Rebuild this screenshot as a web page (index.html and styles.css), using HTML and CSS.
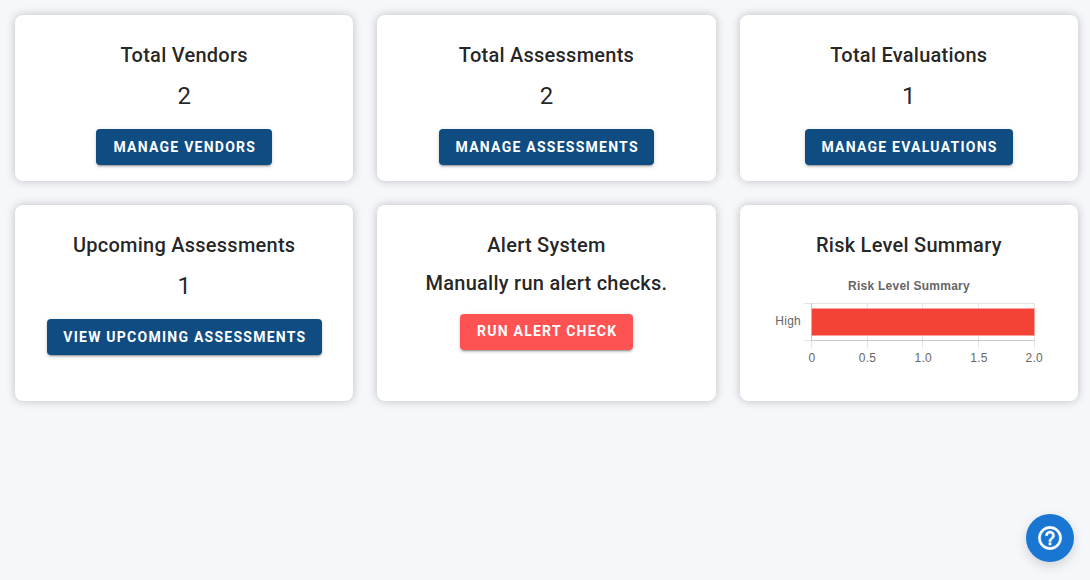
FILE: index.html
```html
<!DOCTYPE html>
<html lang="en">
<head>
<meta charset="utf-8">
<title>Dashboard</title>
<link rel="stylesheet" href="styles.css">
</head>
<body>
<main class="dashboard">
  <section class="card">
    <h2 class="card-title">Total Vendors</h2>
    <p class="card-value">2</p>
    <button class="btn">Manage Vendors</button>
  </section>
  <section class="card">
    <h2 class="card-title">Total Assessments</h2>
    <p class="card-value">2</p>
    <button class="btn">Manage Assessments</button>
  </section>
  <section class="card">
    <h2 class="card-title">Total Evaluations</h2>
    <p class="card-value">1</p>
    <button class="btn">Manage Evaluations</button>
  </section>
  <section class="card">
    <h2 class="card-title">Upcoming Assessments</h2>
    <p class="card-value">1</p>
    <button class="btn">View Upcoming Assessments</button>
  </section>
  <section class="card">
    <h2 class="card-title">Alert System</h2>
    <p class="card-text">Manually run alert checks.</p>
    <button class="btn btn-alert">Run Alert Check</button>
  </section>
  <section class="card">
    <h2 class="card-title">Risk Level Summary</h2>
    <svg class="chart" width="306" height="110" viewBox="756 270 306 110">
      <text class="chart-title" x="909" y="290">Risk Level Summary</text>
      <g class="grid">
        <path d="M804 303.5H1035M867.5 303V348M922.500 303V348M978.500 303V348M1034.500 303V348M804 340.500H812M811.500 341V348"/>
        <path class="axis" d="M811.500 303V341M811 340.500H1035"/>
      </g>
      <rect class="bar-edge" x="811" y="308" width="224" height="28"/>
      <rect class="bar" x="812" y="309" width="222" height="26"/>
      <text class="tick end" x="801" y="325">High</text>
      <text class="tick" x="812" y="362">0</text>
      <text class="tick" x="867.500" y="362">0.5</text>
      <text class="tick" x="923.300" y="362">1.0</text>
      <text class="tick" x="979" y="362">1.5</text>
      <text class="tick" x="1034.300" y="362">2.0</text>
    </svg>
  </section>
</main>
<button class="help" aria-label="Help">
  <svg width="28" height="28" viewBox="0 0 24 24"><path fill="currentColor" stroke="currentColor" stroke-width=".4" d="M11 18h2v-2h-2v2m1-16A10 10 0 0 0 2 12a10 10 0 0 0 10 10 10 10 0 0 0 10-10A10 10 0 0 0 12 2m0 18c-4.410 0-8-3.590-8-8s3.590-8 8-8 8 3.590 8 8-3.590 8-8 8m0-14a4 4 0 0 0-4 4h2a2 2 0 0 1 2-2 2 2 0 0 1 2 2c0 2-3 1.750-3 5h2c0-2.250 3-2.500 3-5a4 4 0 0 0-4-4z"/></svg>
</button>
</body>
</html>
```
FILE: styles.css
```css
* { box-sizing: border-box; }
body {
  margin: 0;
  min-height: 580px;
  padding: 15px 12px 0 15px;
  background: #f5f7fb;
  color: rgba(0, 0, 0, .87);
  font-family: Roboto, sans-serif;
}
.dashboard {
  display: grid;
  grid-template-columns: repeat(3, 1fr);
  grid-template-rows: 166px 196px;
  gap: 24px;
}
.card {
  display: flex;
  flex-direction: column;
  align-items: center;
  padding: 24px 16px 16px;
  border-radius: 8px;
  background: #fff;
  box-shadow: 0 0 10px rgba(0, 0, 0, .23);
}
.card-title, .card-text {
  margin: 0;
  font-size: 20px;
  font-weight: 500;
  line-height: 32px;
  letter-spacing: .25px;
}
.card-text { margin: 6px 0 15px; }
.card-value {
  margin: 9px 0 17px;
  font-size: 24px;
  line-height: 32px;
}
.btn {
  min-width: 176px;
  height: 36px;
  padding: 0 15.3px 0 16.7px;
  border: 0;
  border-radius: 4px;
  background: #0f4c81;
  color: #fff;
  font: 700 14px Roboto, sans-serif;
  letter-spacing: 1.250px;
  text-transform: uppercase;
  white-space: nowrap;
  box-shadow: 0 3px 1px -2px rgba(0,0,0,.2), 0 2px 2px rgba(0,0,0,.14), 0 1px 5px rgba(0,0,0,.12);
}
.btn-alert { min-width: 0; padding-bottom: 2px; background: #ff5252; }
.chart {
  flex: none;
  margin-top: 9px;
  font: 12px "Liberation Sans", Arial, sans-serif;
  letter-spacing: .25px;
}
.chart text { fill: #666; text-anchor: middle; }
.chart .chart-title { font-weight: 700; }
.chart .end { text-anchor: end; }
.grid { fill: none; stroke: #e5e5e5; }
.axis { stroke: #c9c9c9; }
.bar { fill: #f44336; }
.bar-edge { fill: #faa19b; }
.help {
  position: fixed;
  right: 16px;
  bottom: 18px;
  display: grid;
  place-items: center;
  width: 48px;
  height: 48px;
  padding: 0;
  border: 0;
  border-radius: 50%;
  background: #1976d2;
  color: #fff;
  box-shadow: 0 4px 12px rgba(0, 0, 0, .15);
}
```
